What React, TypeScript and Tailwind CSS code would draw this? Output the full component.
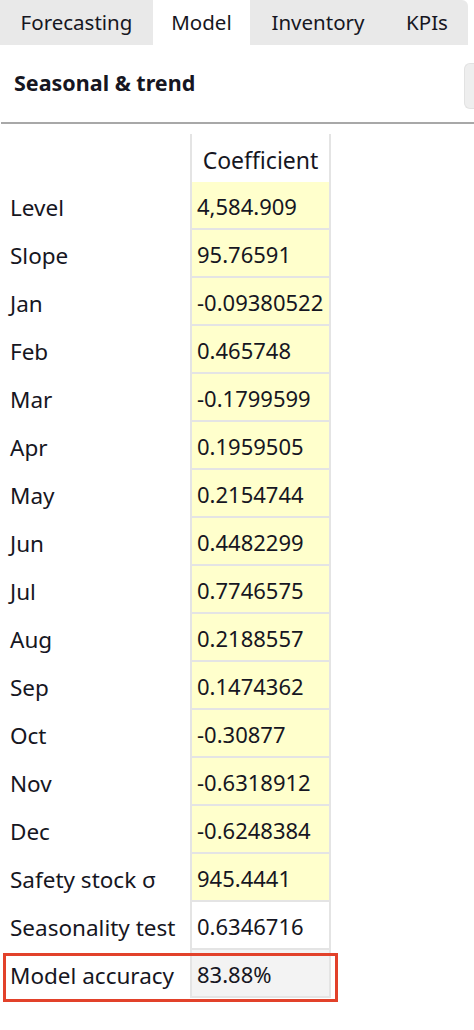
import React from "react";

const rows: [string, string, boolean][] = [
  ["Level", "4,584.909", true],
  ["Slope", "95.76591", true],
  ["Jan", "-0.09380522", true],
  ["Feb", "0.465748", true],
  ["Mar", "-0.1799599", true],
  ["Apr", "0.1959505", true],
  ["May", "0.2154744", true],
  ["Jun", "0.4482299", true],
  ["Jul", "0.7746575", true],
  ["Aug", "0.2188557", true],
  ["Sep", "0.1474362", true],
  ["Oct", "-0.30877", true],
  ["Nov", "-0.6318912", true],
  ["Dec", "-0.6248384", true],
  ["Safety stock σ", "945.4441", true],
  ["Seasonality test", "0.6346716", false],
];

export default function App() {
  return (
    <div
      className="w-[474px] h-[1030px] bg-white text-[#161622] overflow-hidden"
      style={{ fontFamily: '"Noto Sans", "DejaVu Sans", sans-serif' }}
    >
      {/* Tabs */}
      <div className="flex h-[45px] w-[468px] bg-[#e9e9e9] rounded-tr-[6px] text-[20.5px]">
        <div className="w-[153px] flex items-center justify-center">Forecasting</div>
        <div className="w-[97px] flex items-center justify-center bg-white">Model</div>
        <div className="w-[136px] flex items-center justify-center">Inventory</div>
        <div className="flex-1 flex items-center justify-center">KPIs</div>
      </div>
      {/* Header */}
      <div className="flex items-center h-[77px] pl-[14px]">
        <div className="font-bold text-[21.5px] flex-1">Seasonal &amp; trend</div>
        <div className="w-[10px] h-[46px] bg-[#eeeeee] rounded-l-[6px] border border-r-0 border-[#e2e2e2] mt-[4px]" />
      </div>
      <div className="h-[2px] bg-[#a8a8a8] ml-[1px]" />
      {/* Table */}
      <div className="flex flex-col pt-[10px] text-[22.5px]">
        <div className="flex h-[48px]">
          <div className="w-[190px]" />
          <div className="w-[141px] border-x-2 border-[#e4e4e4] flex items-center justify-center pt-[4px] text-[23px]">
            Coefficient
          </div>
        </div>
        {rows.map(([label, value, yellow]) => (
          <div key={label} className="flex h-[48px]">
            <div className="w-[190px] flex items-center pl-[10px] pt-[4px] whitespace-nowrap">{label}</div>
            <div
              className={`w-[141px] border-x-2 border-b-2 border-[#e4e4e4] flex items-center pl-[5px] pt-[2px] text-[22px] whitespace-nowrap ${
                yellow ? "bg-[#ffffcc]" : "bg-white"
              }`}
            >
              {value}
            </div>
          </div>
        ))}
        <div className="relative flex h-[48px]">
          <div className="w-[190px] flex items-center pl-[10px] pt-[4px] whitespace-nowrap">Model accuracy</div>
          <div className="w-[141px] border-x-2 border-b-2 border-[#e4e4e4] bg-[#f3f3f3] flex items-center pl-[5px] pt-[2px] text-[22px]">
            83.88%
          </div>
          <div className="absolute left-[3px] top-[3px] w-[335px] h-[49px] border-[3px] border-[#e2412a]" />
        </div>
      </div>
    </div>
  );
}
